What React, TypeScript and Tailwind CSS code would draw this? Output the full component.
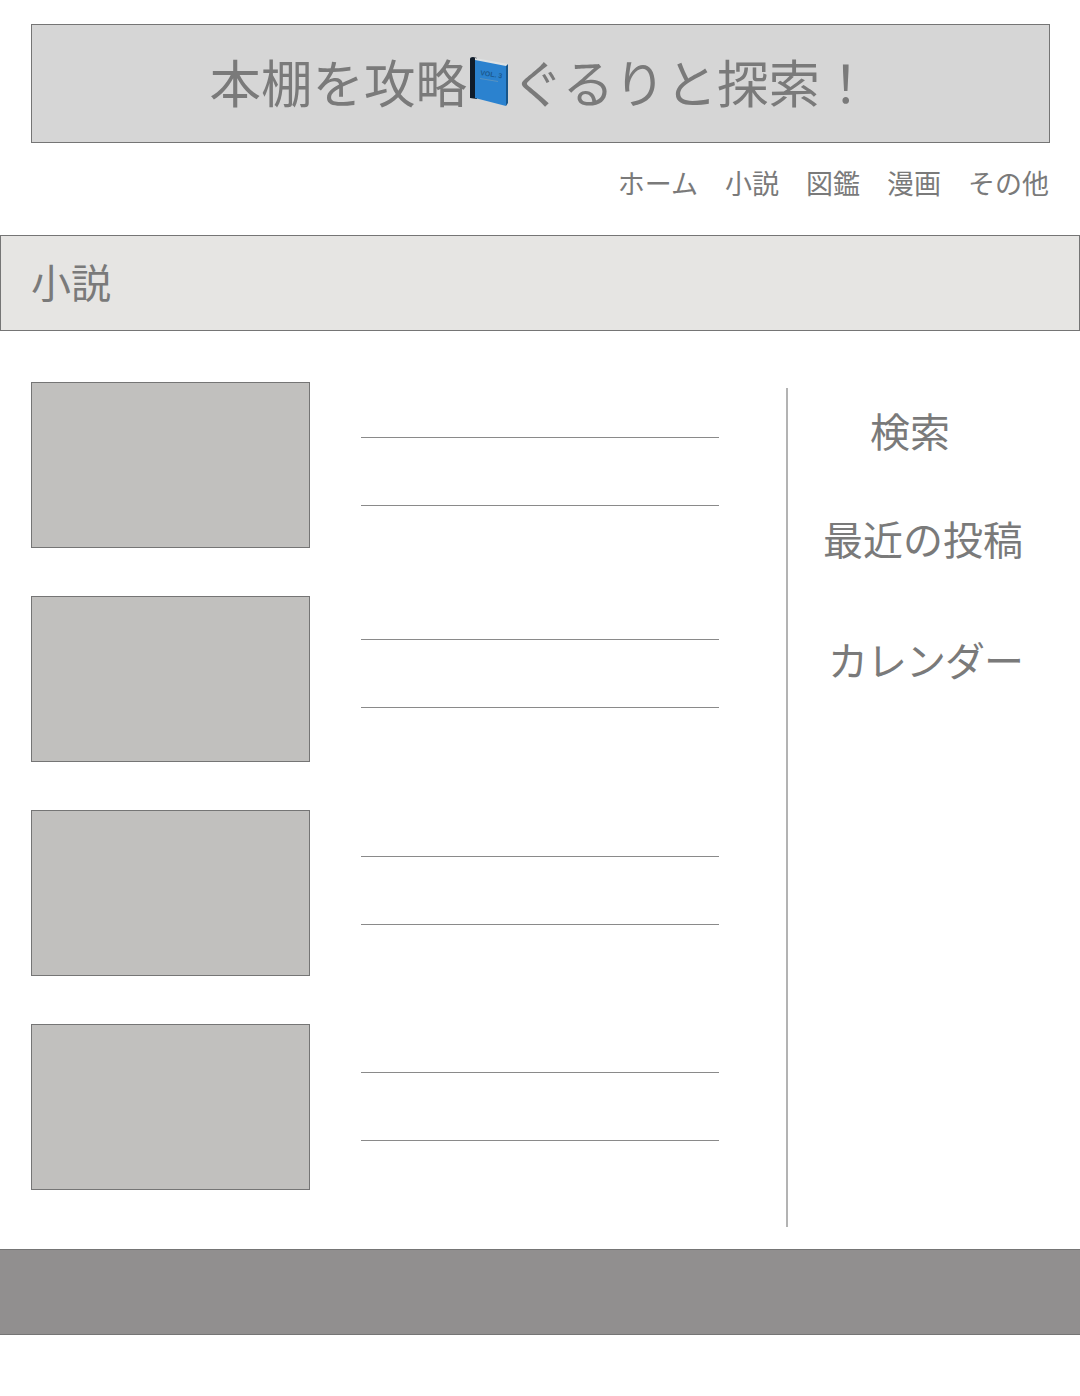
const NAV = ["ホーム", "小説", "図鑑", "漫画", "その他"];

// first rule offset differs per row in the reference
const ROWS = ["pt-[55px]", "pt-[43px]", "pt-[46px]", "pt-[48px]"];

function BookIcon() {
  return (
    <svg width="42" height="50" viewBox="0 0 42 50" className="shrink-0 mt-[3px]" aria-hidden="true">
      <path d="M3 2 Q3 0 6 0 L10 1 L10 42 L3 41 Z" fill="#101c2a" />
      <path d="M8 1 L41 7 L39 10 L8 4 Z" fill="#dfe2e3" />
      <path d="M8 3 L39 9 L39 49 L8 41 Z" fill="#2b82cf" />
      <path d="M39 9 L41 7 L41 46 L39 49 Z" fill="#18568a" />
      <text x="13" y="18" fontSize="7" fontWeight="700" fill="#1c5a90" transform="rotate(9 13 18)" fontFamily='"Liberation Sans", sans-serif'>
        VOL. 3
      </text>
      <path d="M13 21 L31 24 L31 25 L13 22 Z" fill="#5a92c0" />
    </svg>
  );
}

function Row({ offset }: { offset: string }) {
  return (
    <div className="flex">
      <div className="w-[279px] h-[166px] bg-[#c1c0be] border border-[#757575] shrink-0" />
      <div className={`ml-[51px] w-[358px] ${offset}`}>
        <div className="h-[1px] bg-[#8a8a8a]" />
        <div className="h-[1px] bg-[#8a8a8a] mt-[67px]" />
      </div>
    </div>
  );
}

export default function App() {
  return (
    <div
      className="relative w-[1080px] h-[1396px] bg-white text-[#7a7a7a] overflow-hidden"
      style={{ fontFamily: '"Noto Sans CJK JP", "Noto Sans", sans-serif' }}
    >
      <div className="px-[30px] pt-[24px] pr-[30px]">
        <div className="ml-[1px] h-[119px] bg-[#d6d6d6] border border-[#757575] flex items-center justify-center pb-[6px]">
          <h1 className="flex items-center text-[51.5px] leading-none font-normal">
            <span>本棚を攻略</span>
            <BookIcon />
            <span className="ml-[3px]">ぐるりと探索！</span>
          </h1>
        </div>
      </div>

      <nav className="flex justify-end gap-[27px] pr-[31px] mt-[22px] h-[34px] items-center text-[27px] leading-none font-normal">
        {NAV.map((n) => (
          <span key={n}>{n}</span>
        ))}
      </nav>

      <div className="mt-[36px] h-[96px] bg-[#e6e5e3] border border-[#757575] flex items-center pl-[30px] pb-[5px]">
        <h2 className="text-[40px] leading-none font-normal">小説</h2>
      </div>

      <div className="flex mt-[51px] pl-[31px]">
        <div className="flex flex-col gap-[48px] w-[755px] shrink-0">
          {ROWS.map((o, i) => (
            <Row key={i} offset={o} />
          ))}
        </div>
        <aside className="mt-[6px] h-[839px] border-l-2 border-[#b3b3b3] text-[40px] leading-none font-normal">
          <div className="pl-[82px] pt-[22px]">検索</div>
          <div className="pl-[35px] pt-[68px]">最近の投稿</div>
          <div className="pl-[40px] pt-[81px] tracking-[-1px]">カレンダー</div>
        </aside>
      </div>

      <footer className="mt-[22px] h-[86px] bg-[#918f8f] border-y border-[#757575]" />
    </div>
  );
}
